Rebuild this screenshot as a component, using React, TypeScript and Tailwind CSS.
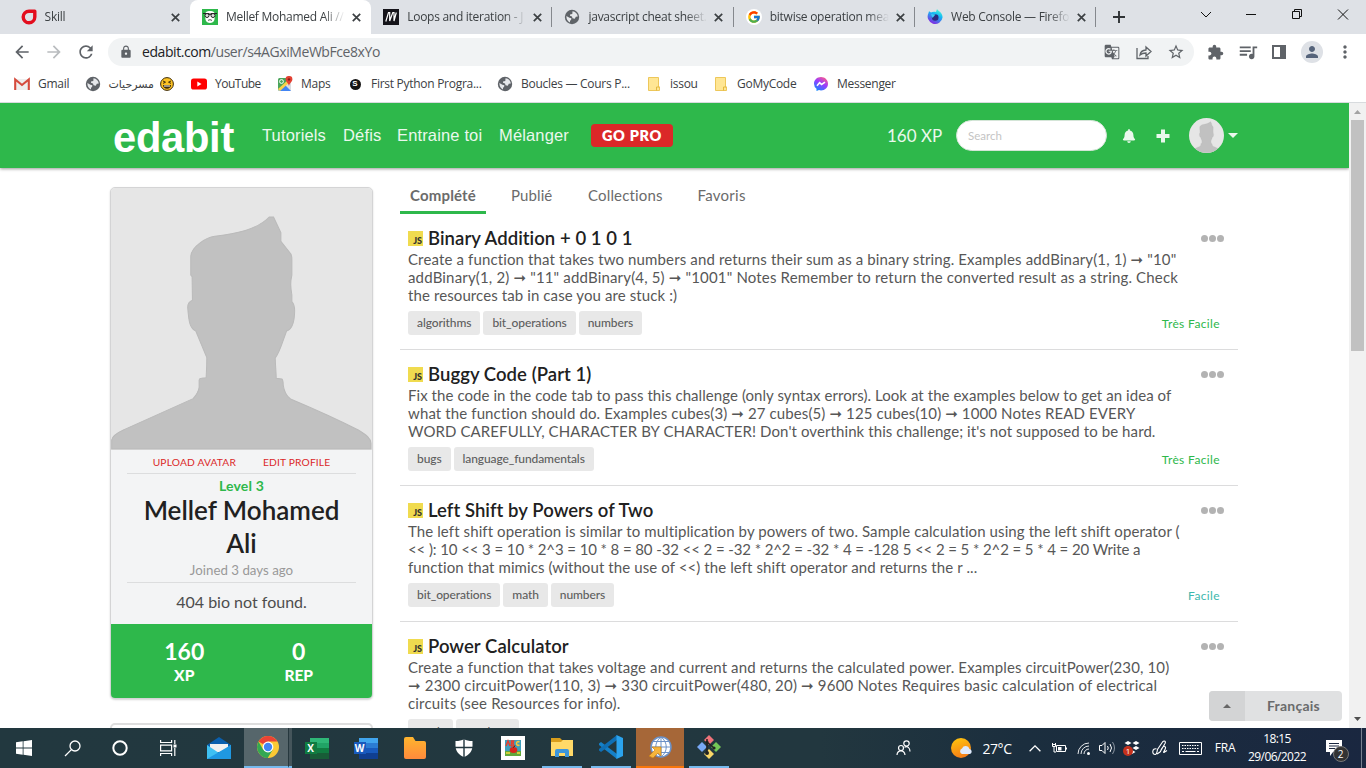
import React from "react";
import {
  MdArrowBack, MdArrowForward, MdRefresh, MdLock, MdGTranslate, MdStarBorder, MdExtension,
  MdQueueMusic, MdPerson, MdMoreVert,
} from "react-icons/md";
import { FcGoogle } from "react-icons/fc";
import { FaBell } from "react-icons/fa";

const UI = "font-['Open_Sans','DejaVu_Sans',sans-serif]";

/* ---------- small drawings ---------- */

const SkillIcon = () => (
  <svg width="16" height="16" viewBox="0 0 16 16"><path d="M8 2.200h5.800V8A5.800 5.800 0 1 1 8 2.200z" fill="none" stroke="#e30d1d" strokeWidth="3.400" strokeLinejoin="round" /></svg>
);
const EdabitIcon = () => (
  <svg width="16" height="16" viewBox="0 0 16 16">
    <rect width="16" height="16" fill="#2eb84b" />
    <path d="M3 6C2.500 3.500 5 2 8 2s5.500 1.500 5 4l-.6 5c-.5 2-2.400 3-4.400 3s-3.900-1-4.400-3z" fill="#fff" />
    <path d="M1 4.500h5.500l1.500 1 1.500-1H15" stroke="#222" fill="none" strokeWidth="1.200" />
    <circle cx="5" cy="6.500" r="2" fill="#ddd" stroke="#222" strokeWidth="1" /><circle cx="11" cy="6.500" r="2" fill="#ddd" stroke="#222" strokeWidth="1" />
    <path d="M6 11.500c1.300-1 2.700-1 4 0" stroke="#555" fill="none" />
  </svg>
);
const MdnIcon = () => (
  <svg width="16" height="16" viewBox="0 0 16 16"><rect width="16" height="16" fill="#15141a" /><path d="M2.800 12.500 5.500 3.500h1.200V12L9.800 3.500H11V12l2.300-8.500" stroke="#fff" strokeWidth="1.200" fill="none" /></svg>
);
const Globe = () => (
  <svg width="16" height="16" viewBox="0 0 16 16"><circle cx="8" cy="8" r="7.200" fill="#5f6368" /><path d="M8.500 2.300c2.800.2 5 2.400 5.300 5.200l-2 .2-1 2-2.300-.4L8 7.500l-2-.8V5.500l2.300-.4zM2.400 7l3 1.800 2 .4-.4 2-1 .4v1.800C3.800 12.500 2.200 10 2.400 7z" fill="#e6e8eb" /></svg>
);
const GoogleIcon = () => (
  <span className="flex size-4 items-center justify-center rounded-full bg-white"><FcGoogle size={14} /></span>
);
const FirefoxIcon = () => (
  <svg width="16" height="16" viewBox="0 0 16 16">
    <defs><linearGradient id="ff" x1="0.800" y1="0" x2="0.300" y2="1"><stop offset="0" stopColor="#54ffd0" /><stop offset=".4" stopColor="#13b8f5" /><stop offset="1" stopColor="#8a1fe0" /></linearGradient></defs>
    <path d="M10 0c1 1.800 5.600 3.500 5.600 8.300A7.500 7.500 0 1 1 1.500 4L2 2.200 4 3.500c1.600-1 3.500-.8 5-.6z" fill="url(#ff)" />
    <circle cx="8.200" cy="8.500" r="3.300" fill="#2b2a7f" /><path d="M4 5l4.500.5L7 7.200 5.500 9z" fill="#3cc8f5" />
  </svg>
);
const GmailIcon = () => (
  <svg width="16" height="16" viewBox="0 0 16 16"><rect x="1" y="3" width="14" height="11" fill="#eee" /><path d="M1.200 14V3.500L8 9l6.800-5.500V14" fill="none" stroke="#d54b3d" strokeWidth="2.100" /></svg>
);
const YoutubeIcon = () => (
  <svg width="16" height="16" viewBox="0 0 16 16"><rect y="2.500" width="16" height="11" rx="2.600" fill="#f00" /><path d="M6.300 5.600v4.800L10.500 8z" fill="#fff" /></svg>
);
const MapsIcon = () => (
  <svg width="16" height="16" viewBox="0 0 16 16"><rect x="1" y="2" width="13" height="13" rx="1.500" fill="#4ba55b" /><path d="M1 14 14 3v12H2z" fill="#dadce0" /><path d="M2 15l6-6 6 6z" fill="#4285f4" /><path d="M1 13 12 3h2v2L3 15z" fill="#fbd24a" /><circle cx="4.500" cy="5.500" r="1.900" fill="none" stroke="#fff" /><path d="M12 0a3.300 3.300 0 0 1 3.400 3.400C15.400 5.500 12.500 7 12 10c-.5-3-3.400-4.500-3.400-6.600A3.300 3.300 0 0 1 12 0z" fill="#e34133" /><circle cx="12" cy="3.400" r="1.200" fill="#8c1d14" /></svg>
);
const SIcon = () => (
  <span className="flex size-[11px] items-center justify-center rounded-full bg-[#151515] font-['Liberation_Sans',sans-serif] text-[8px] font-bold leading-none text-white">S</span>
);
const Folder = () => (
  <svg width="16" height="16" viewBox="0 0 16 16"><path d="M2.500 1.500h10V11h1v3.500h-11z" fill="#ffe694" stroke="#edc75a" /><path d="M10.500 14.500V11h3" fill="none" stroke="#e3b93f" /></svg>
);
const MessengerIcon = () => (
  <svg width="16" height="16" viewBox="0 0 16 16"><defs><linearGradient id="ms" x1=".2" y1="1" x2=".8" y2="0"><stop offset="0" stopColor="#0a8cff" /><stop offset=".55" stopColor="#9a3cff" /><stop offset="1" stopColor="#ff5c87" /></linearGradient></defs><path d="M8 1c4 0 7 2.900 7 6.700s-3 6.700-7 6.700l-2-.3L3.500 15v-2.200A6.600 6.600 0 0 1 1 7.700C1 3.900 4 1 8 1z" fill="url(#ms)" /><path d="m4 9.700 2.600-3 2 1.700L12 6.200" stroke="#fff" strokeWidth="1.600" fill="none" /></svg>
);
const Emoji = () => (
  <svg width="14" height="14" viewBox="0 0 14 14"><circle cx="7" cy="7" r="6.400" fill="#fcc223" stroke="#3b2a0a" strokeWidth="1" /><path d="m3 4 2.500 1.200L3 6.400M11 4 8.500 5.200 11 6.400" fill="none" stroke="#3b2a0a" /><path d="M3 8h8c0 5-8 5-8 0z" fill="#3b2a0a" /><path d="M4 8.500h6v1H4z" fill="#fff" /></svg>
);

const silhouette =
  "M36 807V780C38 765 60 755 75 748L280 656C290 645 297 630 298 622V600Q299 595 305 595L319 593C320 575 321 555 321 533L288 453C270 445 267 425 264 385C263 372 270 364 278 361L277 290 273 285V230C274 200 320 172 345 169C410 160 470 150 508 111H521L543 158V184L573 222Q576 228 576 240V285C572 300 572 325 576 345V365C583 372 585 385 584 400C583 425 578 448 560 453C545 495 540 515 526 535C527 560 529 580 529 595L546 597Q550 600 550 615C552 630 560 648 572 657C650 690 720 722 775 750C800 765 812 775 813 790V807Z";
const Avatar = ({ className }: { className: string }) => (
  <svg className={className} viewBox="34 24 782 786" preserveAspectRatio="none">
    <rect x="34" y="24" width="782" height="786" fill="#e6e6e6" />
    <path d={silhouette} fill="#c1c1c1" stroke="#bababa" strokeWidth="3" />
  </svg>
);

/* ---------- browser chrome ---------- */

type TabData = { icon: React.ReactNode; label: string; active?: boolean; sep?: boolean };
const tabs: TabData[] = [
  { icon: <SkillIcon />, label: "Skill" },
  { icon: <EdabitIcon />, label: "Mellef Mohamed Ali //", active: true },
  { icon: <MdnIcon />, label: "Loops and iteration - J", sep: true },
  { icon: <Globe />, label: "javascript cheat sheet.", sep: true },
  { icon: <GoogleIcon />, label: "bitwise operation mea", sep: true },
  { icon: <FirefoxIcon />, label: "Web Console — Firefo", sep: true },
];

const Tab = ({ t }: { t: TabData }) => (
  <div className={`flex h-[34px] w-[181.300px] shrink-0 items-center pl-3 ${t.active ? "rounded-t-lg bg-white" : ""}`}>
    <span className="flex w-4 shrink-0 justify-center">{t.icon}</span>
    <span className="ml-2 w-[119px] shrink-0 whitespace-nowrap text-[12px] tracking-[-0.270px] text-[#3c4043] [mask-image:linear-gradient(90deg,#000_82%,transparent_100%)]">{t.label}</span>
    <svg className="ml-[7px] size-[9px] shrink-0" viewBox="0 0 9 9"><path d="m.8.8 7.400 7.400M8.200.8.8 8.200" stroke="#3c4043" strokeWidth="1.700" /></svg>
    {t.sep && <span className="ml-auto h-5 w-px bg-[#85888d]" />}
  </div>
);

const TabStrip = () => (
  <div className="flex h-[34px] bg-[#dee1e6] pl-[8.600px]">
    {tabs.map((t) => <Tab key={t.label} t={t} />)}
    <div className="flex w-[46px] items-center pl-[17px]"><svg width="12" height="12" viewBox="0 0 12 12"><path d="M6 0v12M0 6h12" stroke="#303336" strokeWidth="1.900" /></svg></div>
    <svg className="ml-auto mr-[14px] h-[34px] w-[152px] shrink-0" viewBox="0 0 152 34" fill="none" stroke="#111">
      <path d="m1 12 5 5 5-5M46 14.500h10M92.500 11.500h7v7h-7zM94.500 11.500v-2h7v7h-2M138 9.500l10 10M148 9.500l-10 10" />
    </svg>
  </div>
);

const Toolbar = () => (
  <div className="flex h-9 items-center bg-white pl-3 text-[#5f6368]">
    <MdArrowBack size={20} />
    <MdArrowForward size={20} className="ml-3 text-[#b9bcbf]" />
    <MdRefresh size={20} className="ml-3" />
    <div className="ml-3 flex h-7 w-[1086px] items-center rounded-full bg-[#f1f3f4] pl-[11px] pr-2">
      <MdLock size={14} />
      <span className="ml-[9px] pb-px text-[14px] tracking-[-0.430px] text-[#5f6368]"><span className="text-[#202124]">edabit.com</span>/user/s4AGxiMeWbFce8xYo</span>
      <MdGTranslate size={16} className="ml-auto" />
      <svg className="ml-4 size-4" viewBox="0 0 16 16" fill="none" stroke="#5f6368" strokeWidth="1.300"><path d="M1 4v10.500h11V12M4 11c.4-3 2.500-4.800 6-5V3l5 4.500-5 4.500V9c-2.500 0-4.500.5-6 2z" /></svg>
      <MdStarBorder size={18} className="ml-[15px] mr-px" />
    </div>
    <MdExtension size={17} className="ml-[13px]" />
    <MdQueueMusic size={22} className="ml-[13px]" />
    <svg className="ml-[13px] size-[14px]" viewBox="0 0 14 14"><path d="M1 1h12v12H1z" fill="#fff" stroke="#5f6368" strokeWidth="2" /><path d="M8 1h5v12H8z" fill="#5f6368" /></svg>
    <span className="ml-[15px] flex size-[22px] items-center justify-center rounded-full bg-[#dee1e6]"><MdPerson size={18} className="text-[#56647b]" /></span>
    <MdMoreVert size={20} className="ml-3" />
  </div>
);

const Bm = ({ w, icon, label }: { w: string; icon: React.ReactNode; label: React.ReactNode }) => (
  <div className={`flex shrink-0 items-center ${w}`}>
    <span className="flex w-4 shrink-0 justify-center">{icon}</span>
    <span className="ml-2 flex items-center whitespace-nowrap text-[12px] tracking-[-0.280px] text-[#3c4043]">{label}</span>
  </div>
);
const Bookmarks = () => (
  <div className="flex h-[33px] items-center border-b border-[#d8dbde] bg-white pl-[14px] pb-[4px]">
    <Bm w="w-[71px]" icon={<GmailIcon />} label="Gmail" />
    <Bm w="w-[106px]" icon={<Globe />} label={<><span dir="rtl" className="w-[45px] text-[11px] tracking-normal">مسرحيات</span><span className="ml-[6px]"><Emoji /></span></>} />
    <Bm w="w-[86px]" icon={<YoutubeIcon />} label={<span className="tracking-[-0.500px]">YouTube</span>} />
    <Bm w="w-[70px]" icon={<MapsIcon />} label="Maps" />
    <Bm w="w-[150px]" icon={<SIcon />} label="First Python Progra..." />
    <Bm w="w-[149px]" icon={<Globe />} label="Boucles — Cours P..." />
    <Bm w="w-[67px]" icon={<Folder />} label="issou" />
    <Bm w="w-[100px]" icon={<Folder />} label="GoMyCode" />
    <Bm w="w-[110px]" icon={<MessengerIcon />} label="Messenger" />
  </div>
);

/* ---------- page ---------- */

const Header = () => (
  <header className="relative z-10 flex h-[65px] shrink-0 items-center bg-[#2eb84b] pl-[113px] font-['Liberation_Sans',Arial,sans-serif] text-white shadow-[0_1px_3px_rgba(0,0,0,0.4)]">
    <span className="w-[149px] pt-[4px] text-[41.700px] font-bold leading-none tracking-[-0.300px]">edabit</span>
    <nav className="flex text-[16.500px] tracking-[0.150px] text-[#eaf8ed]">
      <span className="w-[81px]">Tutoriels</span>
      <span className="w-[54px]">Défis</span>
      <span className="w-[102px]">Entraine toi</span>
      <span className="w-[92px]">Mélanger</span>
    </nav>
    <span className="flex h-[23px] w-[82px] items-center justify-center rounded-[4px] bg-[#db2828] font-[Lato,sans-serif] text-[14.500px] font-extrabold tracking-[0.700px]">GO PRO</span>
    <span className="ml-[214px] w-[69px] whitespace-nowrap font-[Lato,sans-serif] text-[17px] text-[#eaf8ed]">160 XP</span>
    <span className="flex h-[31px] w-[151px] items-center rounded-full border border-[#d4e5d7] bg-white pl-[11px] font-[Lato,sans-serif] text-[11.500px] text-[#c4c4c4]">Search</span>
    <FaBell size={14} className="ml-[15px] text-[#eaf8ed]" />
    <svg className="ml-5 size-[14px]" viewBox="0 0 14 14"><path d="M7 .5v13M.5 7h13" stroke="#eaf8ed" strokeWidth="4" /></svg>
    <Avatar className="ml-[19px] size-[35px] rounded-full" />
    <svg className="ml-1 h-[5px] w-[10px]" viewBox="0 0 10 5"><path d="M0 0h10L5 5z" fill="#eaf8ed" /></svg>
  </header>
);

const Profile = () => (
  <aside className="w-[263px] shrink-0">
    <div className="h-[512px] overflow-hidden rounded-[5px] border border-[#d4d4d5] bg-[#f3f4f5] text-center shadow-[0_1px_2px_#d4d4d5]">
      <Avatar className="block h-[262px] w-full" />
      <div className="mx-4 flex h-[24px] items-center justify-center gap-[27px] border-b border-[#dcddde] pt-[2px] text-[10.250px] text-[#db2828]">
        <span className="tracking-[0.160px]">UPLOAD AVATAR</span><span className="tracking-[0.150px]">EDIT PROFILE</span>
      </div>
      <div className="mt-[3px] text-[14px] leading-[18px] font-bold tracking-[0.150px] text-[#2eb84b]">Level 3</div>
      <div className="-mt-px text-[26px] font-semibold leading-[33px] text-[#212121]">Mellef Mohamed<br />Ali</div>
      <div className="mx-4 h-[23px] border-b border-[#dcddde] pt-[2px] text-[13.300px] leading-[17px] text-[#999]">Joined 3 days ago</div>
      <div className="h-[41px] pt-[8px] text-[16px] leading-[22px] text-[#4d4d4d]">404 bio not found.</div>
      <div className="flex h-[76px] bg-[#2eb84b] px-4 pt-[13px] text-white">
        {[["160", "XP"], ["0", "REP"]].map(([n, l]) => (
          <div key={l} className="flex-1">
            <div className="text-[23px] font-bold leading-[28px]">{n}</div>
            <div className="text-[15.500px] font-black leading-[20px]">{l}</div>
          </div>
        ))}
      </div>
    </div>
    <div className="mt-[24px] h-10 rounded-[5px] border-2 border-[#dedede] bg-white" />
  </aside>
);

type Line = [text: string, tracking: string];
type Item = { title: string; lines: Line[]; tags: string[]; level?: string; color?: string };
const items: Item[] = [
  {
    title: "Binary Addition + 0 1 0 1",
    lines: [
      ["Create a function that takes two numbers and returns their sum as a binary string. Examples addBinary(1, 1) ➞ \"10\"", "tracking-[0.135px]"],
      ["addBinary(1, 2) ➞ \"11\" addBinary(4, 5) ➞ \"1001\" Notes Remember to return the converted result as a string. Check", "tracking-[0.165px]"],
      ["the resources tab in case you are stuck :)", "tracking-[0.100px]"],
    ],
    tags: ["algorithms", "bit_operations", "numbers"], level: "Très Facile", color: "text-[#2eb84b]",
  },
  {
    title: "Buggy Code (Part 1)",
    lines: [
      ["Fix the code in the code tab to pass this challenge (only syntax errors). Look at the examples below to get an idea of", "tracking-[0.065px]"],
      ["what the function should do. Examples cubes(3) ➞ 27 cubes(5) ➞ 125 cubes(10) ➞ 1000 Notes READ EVERY", "tracking-[0.115px]"],
      ["WORD CAREFULLY, CHARACTER BY CHARACTER! Don't overthink this challenge; it's not supposed to be hard.", "tracking-[0.090px]"],
    ],
    tags: ["bugs", "language_fundamentals"], level: "Très Facile", color: "text-[#2eb84b]",
  },
  {
    title: "Left Shift by Powers of Two",
    lines: [
      ["The left shift operation is similar to multiplication by powers of two. Sample calculation using the left shift operator (", "tracking-[0.095px]"],
      ["<< ): 10 << 3 = 10 * 2^3 = 10 * 8 = 80 -32 << 2 = -32 * 2^2 = -32 * 4 = -128 5 << 2 = 5 * 2^2 = 5 * 4 = 20 Write a", "tracking-[-0.100px]"],
      ["function that mimics (without the use of <<) the left shift operator and returns the r ...", "tracking-[0.095px]"],
    ],
    tags: ["bit_operations", "math", "numbers"], level: "Facile", color: "text-[#3db8ad]",
  },
  {
    title: "Power Calculator",
    lines: [
      ["Create a function that takes voltage and current and returns the calculated power. Examples circuitPower(230, 10)", "tracking-[0.118px]"],
      ["➞ 2300 circuitPower(110, 3) ➞ 330 circuitPower(480, 20) ➞ 9600 Notes Requires basic calculation of electrical", "tracking-[0.183px]"],
      ["circuits (see Resources for info).", "tracking-[0.180px]"],
    ],
    tags: ["math", "numbers"],
  },
];

const Challenge = ({ it }: { it: Item }) => (
  <article className="h-[136.100px] shrink-0 border-b border-[#dcdcdd] pl-2 pr-[14px] pt-[13px]">
    <div className="flex h-[22px] items-center">
      <span className="flex size-[15px] items-end justify-end bg-[#f0db4f] pr-px pb-px text-[9px] font-black leading-[8px] text-[#323330]">JS</span>
      <h2 className="ml-[5px] whitespace-nowrap text-[18.500px] font-semibold leading-[22px] tracking-[0.060px] text-[#212121]">{it.title}</h2>
      <svg className="ml-auto h-[7px] w-[23px]" viewBox="0 0 23 7" fill="#b3b3b3"><circle cx="3.500" cy="3.500" r="3.500" /><circle cx="11.500" cy="3.500" r="3.500" /><circle cx="19.500" cy="3.500" r="3.500" /></svg>
    </div>
    <div className="pt-px text-[15px] leading-[18.100px] text-[#575757]">
      {it.lines.map(([l, tr]) => <div key={l} className={`whitespace-nowrap ${tr}`}>{l}</div>)}
    </div>
    <div className="mt-[6.500px] flex items-center gap-[3px]">
      {it.tags.map((t) => <span key={t} className="flex h-6 items-center rounded-[3px] bg-[#e8e8e8] px-[9px] pt-px text-[12px] font-medium tracking-[-0.100px] text-[#5e5e5e]">{t}</span>)}
      {it.level && <span className={`ml-auto mr-1 pt-[2px] text-[12px] tracking-[0.370px] ${it.color}`}>{it.level}</span>}
    </div>
  </article>
);

const Main = () => (
  <main className="ml-[27px] w-[838px] shrink-0">
    <div className="flex h-[27px] text-[15px] leading-[16px] text-[#6b6b6b]">
      <span className="w-[86px] border-b-[3px] border-[#2eb84b] text-center font-bold tracking-[0.150px]">Complété</span>
      <span className="ml-[25px] w-[77px] tracking-[0.100px]">Publié</span>
      <span className="w-[109.500px] tracking-[0.160px]">Collections</span>
      <span className="tracking-[0.270px]">Favoris</span>
    </div>
    {items.map((it) => <Challenge key={it.title} it={it} />)}
  </main>
);

const Scrollbar = () => (
  <div className="flex w-[17px] shrink-0 flex-col items-center bg-[#f1f1f1]">
    <svg className="h-[17px] w-[17px] shrink-0" viewBox="0 0 17 17"><path d="m5 11 3.500-4 3.500 4z" fill="#a3a3a3" /></svg>
    <div className="h-[231px] w-[13px] bg-[#c1c1c1]" />
    <svg className="mt-auto h-[17px] w-[17px] shrink-0" viewBox="0 0 17 17"><path d="m5 6 3.500 4L12 6z" fill="#505050" /></svg>
  </div>
);

/* ---------- taskbar ---------- */

const Slot = ({ w = "w-[49px]", cls = "", children }: { w?: string; cls?: string; children: React.ReactNode }) => (
  <div className={`flex h-10 shrink-0 items-center justify-center ${w} ${cls}`}>{children}</div>
);
const Office = ({ l, a, b, c, d, box }: { l: string; a: string; b: string; c: string; d: string; box: string }) => (
  <span className="relative flex h-[21px] w-6 items-center">
    <svg className="absolute inset-0" width="24" height="21" viewBox="0 0 24 21"><path d="M5 0h19v5H5z" fill={a} /><path d="M5 5h19v5H5z" fill={b} /><path d="M5 10h19v5H5z" fill={c} /><path d="M5 15h19v6H5z" fill={d} /></svg>
    <span className={`relative flex h-[12px] w-[12px] items-center justify-center font-['Open_Sans',sans-serif] text-[10px] font-bold leading-none text-white ${box}`}>{l}</span>
  </span>
);

const Taskbar = () => (
  <footer className="flex h-10 bg-[linear-gradient(90deg,#22383f_0%,#22373f_60%,#1b2e3e_75%,#1a2740_100%)] text-white">
    <Slot w="w-12"><svg width="16" height="16" viewBox="0 0 16 16" fill="#fff"><path d="M0 2.300 6.700 1.300v6.300H0zM7.500 1.200 16 0v7.600H7.500zM0 8.400h6.700v6.300L0 13.700zM7.500 8.400H16V16l-8.500-1.200z" /></svg></Slot>
    <Slot w="w-12"><svg width="17" height="17" viewBox="0 0 17 17" fill="none" stroke="#fff" strokeWidth="1.300"><circle cx="11" cy="6" r="5" /><path d="M7.400 9.600 1 16" /></svg></Slot>
    <Slot w="w-12"><svg width="16" height="16" viewBox="0 0 16 16"><circle cx="8" cy="8" r="6.700" fill="none" stroke="#fff" strokeWidth="2" /></svg></Slot>
    <Slot w="w-12"><svg width="17" height="16" viewBox="0 0 17 16" fill="none" stroke="#fff" strokeWidth="1.200"><path d="M.6 0v2.500h11V0M.6 5.200h11v5.600H.6zM.6 16v-2.500h11V16M14.800 0v4M14.800 8v8" /><path d="M13.500 4.500h3v3h-3z" fill="#fff" stroke="none" /></svg></Slot>
    <Slot w="w-[52px] pl-[2px]"><svg width="24" height="23" viewBox="0 0 24 23"><path d="M0 8 12 0l12 8v6H0z" fill="#0a5fae" /><path d="M3 7h18v8H3z" fill="#f1f1f1" /><path d="M0 8l12 8 12-8v14H0z" fill="#3fc0f2" /><path d="M0 22 24 8v14z" fill="#1f98e2" /></svg></Slot>
    <Slot w="w-[44px]" cls="border-b-2 border-[#76b9ed] bg-[#56666b] pl-1">
      <svg width="22" height="22" viewBox="0 0 22 22"><circle cx="11" cy="11" r="11" fill="#fcc934" /><path d="M11 11 1.500 5.500A11 11 0 0 1 20.500 5.500H11z" fill="#ea4335" /><path d="M1.500 5.500A11 11 0 0 0 10.700 22l5-8.300L11 11 6.200 13.700z" fill="#34a853" /><circle cx="11" cy="11" r="5.400" fill="#fff" /><circle cx="11" cy="11" r="4.200" fill="#4285f4" /></svg>
    </Slot>
    <div className="h-10 w-[4px] border-b-2 border-l border-b-[#76b9ed] border-l-[#26383e] bg-[#45555b]" />
    <Slot><Office l="X" a="#2fb777" b="#21a366" c="#107c41" d="#185c37" box="bg-[#107c41]" /></Slot>
    <Slot><Office l="W" a="#41a5ee" b="#2b7cd3" c="#185abd" d="#103f91" box="bg-[#185abd]" /></Slot>
    <Slot><svg width="22" height="22" viewBox="0 0 22 22"><defs><linearGradient id="fo" x1="0" y1="0" x2="0" y2="1"><stop stopColor="#ffb52e" /><stop offset="1" stopColor="#ff8a3c" /></linearGradient></defs><path d="M0 2a2 2 0 0 1 2-2h7l2.500 4H20a2 2 0 0 1 2 2v14a2 2 0 0 1-2 2H2a2 2 0 0 1-2-2z" fill="url(#fo)" /></svg></Slot>
    <Slot><svg width="18" height="18" viewBox="0 0 18 18"><path d="M9 0c2 1.500 5 2 8.500 2v5c0 5-3.500 9-8.500 11C4 16 .5 12 .5 7V2C4 2 7 1.500 9 0z" fill="#fff" /><path d="M9 0v18M0 8.500h18" stroke="#22373f" strokeWidth="1.400" /></svg></Slot>
    <Slot><svg width="24" height="24" viewBox="0 0 24 24"><path d="M0 0h24v24H0z" fill="#fff" /><path d="M4 4h16v16H4z" fill="#3f9fbc" /><path d="M4 15h16v5H4z" fill="#61a83b" /><path d="m5 10 2-5 2 5M10.500 10V5h2l-.5 2.500 1 2.500z" fill="none" stroke="#e6402f" strokeWidth="1.500" /><path d="M18.500 6c-4-2-4 5 0 3" fill="none" stroke="#f5c93b" strokeWidth="1.500" /><ellipse cx="12.500" cy="14" rx="3.800" ry="3" fill="#d9271c" /><path d="M12.500 11.500 14 9.500" stroke="#321" /><path d="M5 17h4M16 17h3" stroke="#f5db3b" strokeWidth="1.500" /></svg></Slot>
    <Slot w="w-10" cls="ml-[5px] border-b-2 border-[#76b9ed]"><svg width="22" height="19" viewBox="0 0 22 19"><path d="M0 0h9l2 2h11v16H0z" fill="#d99e1c" /><path d="M0 4h10l2-2h10v16H0z" fill="#ffd968" /><path d="M4 19v-6a2 2 0 0 1 2-2h10a2 2 0 0 1 2 2v6h-4v-4H8v4z" fill="#3c96dc" /></svg></Slot>
    <Slot w="w-10" cls="ml-[9px] border-b-2 border-[#76b9ed]"><svg width="24" height="24" viewBox="0 0 24 24"><path d="M0 8.500 2 7l16 12v5L0 10z" fill="#1580c8" /><path d="M0 15.500 2 17 18 5V0L0 14z" fill="#0f6fb5" /><path d="M17.500 0 24 3v18l-6.500 3z" fill="#2ba3ee" /></svg></Slot>
    <Slot w="w-12" cls="ml-[5px] border-b-2 border-[#f7760c] bg-[#a66738]"><svg width="24" height="22" viewBox="0 0 24 22"><circle cx="13" cy="11" r="10" fill="#fff" stroke="#6d92c7" strokeWidth="1.500" /><path d="M3 11h20M5 5.500h16M5 16.500h16M13 1v20M13 1c-7 5-7 15 0 20M13 1c7 5 7 15 0 20" fill="none" stroke="#6d92c7" strokeWidth="1" /><path d="M1 20 7 14 4 11h9v9l-3-3-5 5z" fill="#f6b53c" stroke="#c98116" strokeWidth=".7" /></svg></Slot>
    <Slot w="w-10" cls="ml-[5px] border-b-2 border-[#76b9ed]"><svg width="24" height="24" viewBox="0 0 24 24"><path d="m12 0 5 5-5 5-5-5z" fill="#f0737a" /><path d="m5 7 5 5-5 5-5-5z" fill="#78a8f5" /><path d="m19 7 5 5-5 5-5-5z" fill="#74c657" /><path d="m12 14 5 5-5 5-5-5z" fill="#f9d768" /><path d="M10 4v15M10 7l7 6" stroke="#222" strokeWidth="1.500" /><circle cx="10" cy="18" r="2" fill="#222" /><circle cx="10" cy="7" r="1.600" fill="#222" /><circle cx="17" cy="13" r="1.600" fill="#222" /></svg></Slot>

    <div className="ml-auto flex">
      <Slot w="w-[44px]"><svg width="15" height="16" viewBox="0 0 15 16" fill="none" stroke="#fff" strokeWidth="1.200"><circle cx="10.500" cy="3.500" r="2.700" /><circle cx="5" cy="8" r="2.500" /><path d="M1 15c.3-5.500 7.500-5.500 8 0M8.500 7.200c3-1.500 5.500.5 5.500 4.300" /></svg></Slot>
      <Slot w="w-[73px]"><svg width="22" height="21" viewBox="0 0 22 21"><defs><linearGradient id="su" x1=".3" y1="0" x2=".6" y2="1"><stop stopColor="#ffc20f" /><stop offset="1" stopColor="#f47a17" /></linearGradient></defs><circle cx="10" cy="10" r="10" fill="url(#su)" /><path d="M11 16a3 3 0 0 1 0-5.600 4 4 0 0 1 7.500.6 2.600 2.600 0 0 1 .5 5z" fill="#dfeafc" /></svg></Slot>
      <Slot w="w-[30px]" cls="-ml-4"><span className="text-[14px] tracking-[-0.400px] whitespace-nowrap">27°C</span></Slot>
      <Slot w="w-6" cls="ml-[11px]"><svg width="12" height="7" viewBox="0 0 12 7" fill="none" stroke="#fff" strokeWidth="1.300"><path d="m.6 6.300 5.400-5.400 5.400 5.400" /></svg></Slot>
      <Slot w="w-6"><svg width="17" height="12" viewBox="0 0 17 12" fill="none" stroke="#fff"><path d="M5.500 3.500h9v6h-9zM15.500 5.500v2M1.500 1v3.500h3V1M1.500 2.500h3M3 4.500V10h2" /><path d="M7 5h3.500v3.500H7z" fill="#fff" stroke="none" /></svg></Slot>
      <Slot w="w-6"><svg width="13" height="13" viewBox="0 0 13 13" fill="none" stroke="#e8eaed"><path d="M1 12A11 11 0 0 1 12 1M4 12a8 8 0 0 1 8-8M7 12a5 5 0 0 1 5-5" /><circle cx="11.500" cy="11.500" r="1.500" fill="#fff" stroke="none" /></svg></Slot>
      <Slot w="w-6"><svg width="17" height="14" viewBox="0 0 17 14" fill="none" stroke="#fff"><path d="M.5 4.500H3l3-3v11l-3-3H.5zM8.500 5q1.500 2 0 4M11 3q3 4 0 8" /><path d="M13.500 1q4 6 0 12" stroke="#8b95a1" /></svg></Slot>
      <Slot w="w-[26px]"><span className="relative"><svg width="16" height="14" viewBox="0 0 16 14" fill="#fff"><path d="m4 0 3.500 2L4 4 .5 2zM12 0l3.500 2L12 4 8.500 2zM4 5l3.500 2L4 9 .5 7zM12 5l3.500 2L12 9 8.500 7zM8 9l3.500 2L8 13l-3.500-2z" /></svg><span className="absolute -left-[1px] top-[5px] flex size-[10px] items-center justify-center rounded-full bg-[#c5311d] text-[8px] leading-none">1</span></span></Slot>
      <Slot w="w-[26px]" cls="ml-px"><svg width="17" height="16" viewBox="0 0 17 16" fill="none" stroke="#fff" strokeWidth="1.100"><path d="M5.500 9C1 7.500.5 15 4.500 14.500 6 14 6 12 6.500 9.500L11.500 2c2-2 3.500-.5 2.500 1.500L9 12l-3 2M9.500 12c0-3 4-8 5-4.500.5 2-3 5-1.500 5l3-2" /></svg></Slot>
      <Slot w="w-9"><svg width="23" height="13" viewBox="0 0 23 13" fill="none" stroke="#fff"><path d="M.5.5h22v12H.5z" /><path d="M3 3.500h17M3 6.500h17" strokeDasharray="1.500 1" /><path d="M3 9.500h2M6.500 9.500h10M18 9.500h2" /></svg></Slot>
      <Slot w="w-[34px]"><span className="text-[12px] tracking-[-0.200px]">FRA</span></Slot>
      <Slot w="w-[66px]" cls="ml-[2px] flex-col text-[12px] leading-[18px] tracking-[-0.570px]"><span>18:15</span><span>29/06/2022</span></Slot>
      <Slot w="w-[49px]"><span className="relative"><svg width="18" height="16" viewBox="0 0 18 16"><path d="M0 0h16v12H7l-3 4v-4H0z" fill="#fff" /><path d="M3 3.500h10M3 6h10M3 8.500h6" stroke="#1a2740" /></svg><span className="absolute left-[7px] top-[6px] flex size-4 items-center justify-center rounded-full border border-[#777] bg-[#333] text-[10px] leading-none">2</span></span></Slot>
      <span className="ml-[2px] mr-1 h-10 w-px bg-[#76808f]" />
    </div>
  </footer>
);

export default function App() {
  return (
    <div className={`flex h-[768px] w-[1366px] flex-col overflow-hidden bg-white ${UI}`}>
      <TabStrip />
      <Toolbar />
      <Bookmarks />
      <div className="relative flex h-[625px] shrink-0 overflow-hidden">
        <div className="flex w-[1349px] flex-col overflow-hidden bg-white font-[Lato,'DejaVu_Sans',sans-serif] [font-variant-ligatures:none]">
          <Header />
          <div className="flex pl-[110px] pt-[19px]">
            <Profile />
            <Main />
          </div>
        </div>
        <Scrollbar />
        <div className="absolute bottom-[7px] right-[24px] flex h-[30px] w-[133px] overflow-hidden rounded-[4px] bg-[#e0e1e2] font-[Lato,sans-serif] text-[14px] font-bold text-[#6a6b6c]">
          <span className="flex w-9 items-center justify-center bg-[#d3d4d5]"><svg width="8" height="4" viewBox="0 0 8 4"><path d="m0 4 4-4 4 4z" fill="#666" /></svg></span>
          <span className="flex flex-1 items-center justify-center pb-px tracking-[0.250px]">Français</span>
        </div>
      </div>
      <Taskbar />
    </div>
  );
}
